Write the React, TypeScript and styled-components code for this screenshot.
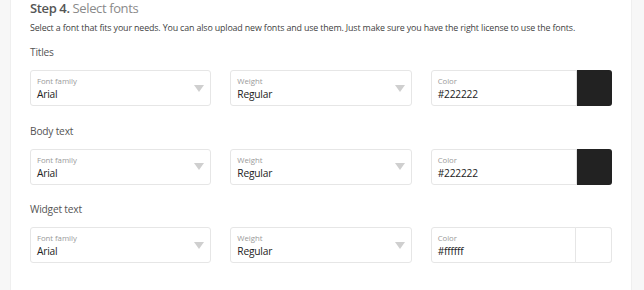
import React from "react";
import styled, { createGlobalStyle } from "styled-components";

const Global = createGlobalStyle`
  html, body { margin: 0; padding: 0; background: #f7f7f7; }
  body { font-family: "Open Sans", "Noto Sans", sans-serif; }
`;

const Page = styled.div`
  padding: 0 12px 0 10px;
  height: 290px;
  overflow: hidden;
`;

const Panel = styled.div`
  background: #fff;
  height: 100%;
  padding: 0 19px;
  border-left: 1px solid #efefef;
  border-right: 1px solid #efefef;
  box-sizing: border-box;
`;

const Heading = styled.h2`
  margin: 0;
  font-size: 13px;
  letter-spacing: -0.38px;
  line-height: 16px;
  font-weight: 600;
  color: #555;
  span { font-weight: 400; color: #8a8a8a; }
`;

const Desc = styled.p`
  margin: 4px 0 8px;
  font-size: 8.9px;
  letter-spacing: -0.15px;
  line-height: 16px;
  color: #3f3f3f;
  white-space: nowrap;
`;

const Section = styled.div`
  margin-bottom: 16.5px;
`;

const SectionLabel = styled.div`
  font-size: 10.2px;
  letter-spacing: -0.2px;
  line-height: 16px;
  color: #555;
  margin-bottom: 10px;
`;

const Grid = styled.div`
  display: grid;
  grid-template-columns: repeat(3, 1fr);
  column-gap: 19px;
`;

const Field = styled.div`
  height: 36px;
  box-sizing: border-box;
  border: 1px solid #e6e6e6;
  border-radius: 3px;
  display: flex;
  align-items: stretch;
  background: #fff;
`;

const FieldBody = styled.div`
  flex: 1;
  padding: 4px 6px 0;
  display: flex;
  flex-direction: column;
`;

const FieldLabel = styled.div`
  font-size: 7.8px;
  letter-spacing: -0.05px;
  line-height: 12px;
  color: #9a9a9a;
`;

const FieldValue = styled.div`
  font-size: 10.2px;
  letter-spacing: -0.2px;
  line-height: 15px;
  color: #222;
`;

const Arrow = styled.div`
  align-self: center;
  margin-right: 6px;
  width: 0;
  height: 0;
  border-left: 5px solid transparent;
  border-right: 5px solid transparent;
  border-top: 7px solid #cfcfcf;
`;

const Swatch = styled.div<{ $c: string }>`
  width: 35px;
  margin: -1px -1px -1px 0;
  background: ${(p) => p.$c};
  border-left: 1px solid #e2e2e2;
  border-radius: 0 3px 3px 0;
  ${(p) => (p.$c === "#ffffff" ? "border: 1px solid #e6e6e6;" : "")}
`;

const Select = ({ label, value }: { label: string; value: string }) => (
  <Field>
    <FieldBody>
      <FieldLabel>{label}</FieldLabel>
      <FieldValue>{value}</FieldValue>
    </FieldBody>
    <Arrow />
  </Field>
);

const ColorInput = ({ value }: { value: string }) => (
  <Field>
    <FieldBody>
      <FieldLabel>Color</FieldLabel>
      <FieldValue>{value}</FieldValue>
    </FieldBody>
    <Swatch $c={value} />
  </Field>
);

const sections = [
  { name: "Titles", color: "#222222" },
  { name: "Body text", color: "#222222" },
  { name: "Widget text", color: "#ffffff" },
];

export default function App() {
  return (
    <>
      <Global />
      <Page>
        <Panel>
          <Heading>
            Step 4. <span>Select fonts</span>
          </Heading>
          <Desc>
            Select a font that fits your needs. You can also upload new fonts and use them. Just make sure you have the right license to use the fonts.
          </Desc>
          {sections.map((s) => (
            <Section key={s.name}>
              <SectionLabel>{s.name}</SectionLabel>
              <Grid>
                <Select label="Font family" value="Arial" />
                <Select label="Weight" value="Regular" />
                <ColorInput value={s.color} />
              </Grid>
            </Section>
          ))}
        </Panel>
      </Page>
    </>
  );
}
